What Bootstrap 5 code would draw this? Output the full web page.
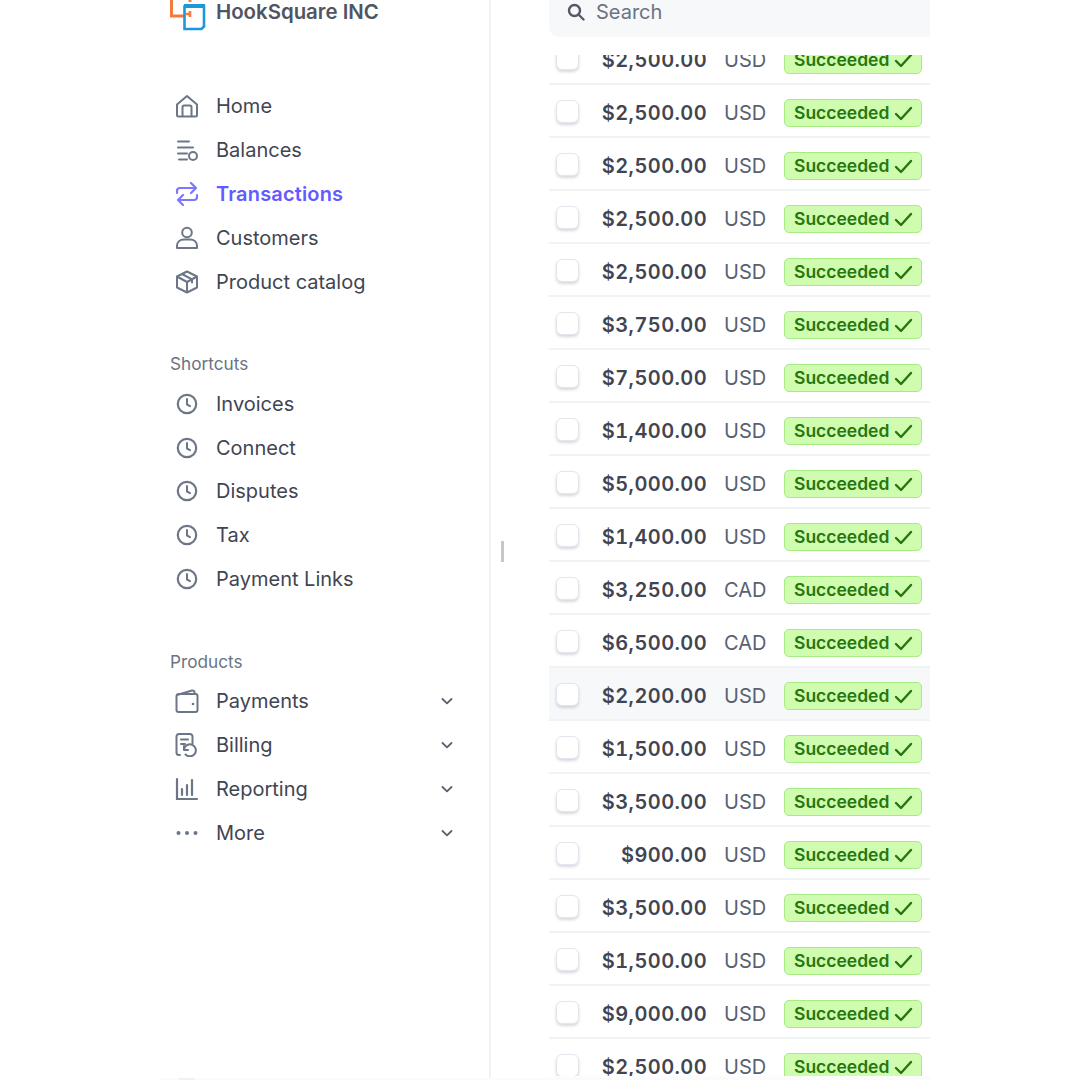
<!DOCTYPE html>
<html lang="en">
<head>
    <meta charset="UTF-8">
    <meta name="viewport" content="width=device-width, initial-scale=1.0">
    <title>Transactions</title>
    <link rel="stylesheet" href="https://cdn.jsdelivr.net/npm/bootstrap@5.3.0/dist/css/bootstrap.min.css">
    <script defer src="https://cdn.jsdelivr.net/npm/bootstrap@5.3.0/dist/js/bootstrap.bundle.min.js"></script>
    <style>
        body { font-family: Inter, "Liberation Sans", sans-serif; color: #414552; background: #fff; overflow: hidden; }
        .app-shell { height: 1080px; overflow: hidden; }
        .side-panel { width: 491px; height: 1080px; padding-left: 170px; padding-right: 35px; border-right: 2px solid #f1f2f4; flex: none; }
        .brand-row { height: 31px; margin-bottom: 53px; }
        .brand-logo { width: 36px; height: 31px; flex: none; }
        .brand-name { font-size: 20.4px; font-weight: 600; color: #4f5563; margin-left: 10px; margin-top: -6px; white-space: nowrap; }
        .side-link { height: 44px; font-size: 20px; color: #414552; white-space: nowrap; }
        .shortcut-group .side-link { height: 43.8px; }
        .side-link.is-active { color: #635bff; font-weight: 600; letter-spacing: .15px; }
        .side-icon { width: 24px; height: 24px; margin: 0 17px 0 5px; flex: none; color: #6c7688; }
        .is-active .side-icon { color: #7d76ff; }
        .side-chevron { width: 14px; height: 14px; color: #596171; }
        .side-heading { font-size: 17.2px; color: #6a7383; height: 22px; line-height: 22px; margin-bottom: 7px; }
        .shortcut-heading { margin-top: 49px; }
        .product-heading { margin-top: 50px; margin-bottom: 6px; }
        .main-panel { width: 381px; margin-left: 58px; height: 1080px; flex: none; }
        .search-box { height: 37px; background: #f6f8fa; border-radius: 0 0 0 10px; padding: 0 0 13px 18px; font-size: 20px; color: #6a7383; }
        .search-box svg { width: 18px; height: 18px; margin-right: 11px; color: #545969; }
        .tx-clip { margin-top: 18px; height: 1021px; overflow: hidden; }
        .tx-list { margin-top: -23px; }
        .tx-row { height: 53px; border-bottom: 2px solid #f1f2f4; padding: 5px 0 0 7px; }
        .tx-row.is-hover { background: #f6f8fa; }
        .tx-check { width: 23px; height: 23px; margin-top: -3px; border-radius: 6px; background: #fff; border: 1px solid #e3e6ec; box-shadow: 0 2px 3px rgba(60,66,87,.2); flex: none; }
        .tx-amount { width: 128px; text-align: right; font-size: 20px; font-weight: 600; color: #414552; flex: none; letter-spacing: .42px; font-variant-numeric: tabular-nums; }
        .tx-currency { width: 60px; margin-left: 17px; font-size: 20px; color: #596171; flex: none; }
        .tx-status { width: 138px; height: 28px; background: #cffcae; border: 1px solid #a6eb84; border-radius: 5px; padding-left: 9px; font-size: 17.5px; font-weight: 600; color: #27760f; flex: none; }
        .tx-status svg { width: 19px; height: 19px; margin-left: 5px; }
        .bottom-strip { height: 4px; background: #fbfcfd; }
        .drag-handle { position: absolute; left: 501px; top: 541px; width: 3px; height: 21px; background: #c4c8ce; }
        .page-fade { position: absolute; left: 160px; top: 1078px; width: 770px; height: 2px; background: #fbfbfc; }
        .page-fade-mark { position: absolute; left: 19px; top: 0; width: 16px; height: 2px; background: #f0f1f3; }
    </style>
</head>
<body>
    <svg width="0" height="0" class="d-block position-absolute">
        <symbol id="ico-clock" viewBox="0 0 24 24"><circle cx="12" cy="12" r="9.2" fill="none" stroke="currentColor" stroke-width="2.2"/><path d="M12 7v5.5l3 1.6" fill="none" stroke="currentColor" stroke-width="2" stroke-linecap="round" stroke-linejoin="round"/></symbol>
        <symbol id="ico-chevron" viewBox="0 0 14 14"><path d="M2.500 5l4.500 4.400L11.500 5" fill="none" stroke="currentColor" stroke-width="1.800" stroke-linecap="round" stroke-linejoin="round"/></symbol>
        <symbol id="ico-check" viewBox="0 0 19 19"><path d="M2 10l5 5L17 4" fill="none" stroke="currentColor" stroke-width="2.400" stroke-linecap="round" stroke-linejoin="round"/></symbol>
    </svg>

    <div class="app-shell d-flex position-relative">
        <!-- Sidebar -->
        <aside class="side-panel">
            <div class="brand-row d-flex align-items-center">
                <svg class="brand-logo" viewBox="0 0 36 31">
                    <path d="M1.500 -6V16H21" fill="none" stroke="#f47b3e" stroke-width="3"/>
                    <path d="M20 -6V2M20 10V17" fill="none" stroke="#f47b3e" stroke-width="3"/>
                    <path d="M14.500 6.500H34V26.500l-2.500 2.500H14.500Z" fill="#fff" stroke="#1d97dc" stroke-width="2.600"/>
                    <path d="M14 6H35" stroke="#1d97dc" stroke-width="4"/>
                    <path d="M16 14h5M20 11v6" stroke="#f47b3e" stroke-width="2.600" fill="none"/>
                </svg>
                <span class="brand-name">HookSquare INC</span>
            </div>

            <nav>
                <a class="side-link d-flex align-items-center text-decoration-none" href="#">
                    <svg class="side-icon" viewBox="0 0 24 24" fill="none" stroke="currentColor" stroke-width="2" stroke-linejoin="round"><path d="M2 10.500 12 2l10 8.500V21a1.500 1.500 0 0 1-1.500 1.500H3.500A1.500 1.500 0 0 1 2 21Z"/><path d="M7.500 22.500V13a1.500 1.500 0 0 1 1.500-1.500h6a1.500 1.500 0 0 1 1.500 1.500v9.500"/></svg>
                    Home
                </a>
                <a class="side-link d-flex align-items-center text-decoration-none" href="#">
                    <svg class="side-icon" viewBox="0 0 24 24" fill="none" stroke="currentColor" stroke-width="2" stroke-linecap="round"><path d="M3 3.500h11M3 9.500h15M3 15.500h9M4 21.500h8"/><circle cx="18" cy="18" r="4" fill="#fff"/></svg>
                    Balances
                </a>
                <a class="side-link is-active d-flex align-items-center text-decoration-none" href="#">
                    <svg class="side-icon" viewBox="0 0 24 24" fill="none" stroke="currentColor" stroke-width="2.200" stroke-linecap="round" stroke-linejoin="round"><path d="M2 11V9a3 3 0 0 1 3-3h16M16 1l5 5-5 5"/><path d="M22 13v2a3 3 0 0 1-3 3H3M8 13l-5 5 5 5"/></svg>
                    Transactions
                </a>
                <a class="side-link d-flex align-items-center text-decoration-none" href="#">
                    <svg class="side-icon" viewBox="0 0 24 24" fill="none" stroke="currentColor" stroke-width="2" stroke-linejoin="round"><circle cx="12" cy="6.500" r="4.800"/><path d="M2 20c0-4 3-6.500 7-6.500h6c4 0 7 2.500 7 6.500v2H2Z"/></svg>
                    Customers
                </a>
                <a class="side-link d-flex align-items-center text-decoration-none" href="#">
                    <svg class="side-icon" viewBox="0 0 24 24" fill="none" stroke="currentColor" stroke-width="2" stroke-linejoin="round"><path d="M12 1.500 22 6.500v11L12 22.500 2 17.500v-11Z"/><path d="M2 6.500 12 12l10-5.500M12 12v10.500M7 4l10 5.300v4"/></svg>
                    Product catalog
                </a>
            </nav>

            <div class="side-heading shortcut-heading">Shortcuts</div>
            <nav class="shortcut-group">
                <a class="side-link d-flex align-items-center text-decoration-none" href="#"><svg class="side-icon"><use href="#ico-clock"/></svg>Invoices</a>
                <a class="side-link d-flex align-items-center text-decoration-none" href="#"><svg class="side-icon"><use href="#ico-clock"/></svg>Connect</a>
                <a class="side-link d-flex align-items-center text-decoration-none" href="#"><svg class="side-icon"><use href="#ico-clock"/></svg>Disputes</a>
                <a class="side-link d-flex align-items-center text-decoration-none" href="#"><svg class="side-icon"><use href="#ico-clock"/></svg>Tax</a>
                <a class="side-link d-flex align-items-center text-decoration-none" href="#"><svg class="side-icon"><use href="#ico-clock"/></svg>Payment Links</a>
            </nav>

            <div class="side-heading product-heading">Products</div>
            <nav>
                <a class="side-link d-flex align-items-center text-decoration-none" href="#">
                    <svg class="side-icon" viewBox="0 0 24 24" fill="none" stroke="currentColor" stroke-width="2" stroke-linejoin="round"><path d="M1.500 7a2 2 0 0 1 2-2h17a2 2 0 0 1 2 2v14a2 2 0 0 1-2 2h-17a2 2 0 0 1-2-2Z"/><path d="M2 6 17 1.500a2 2 0 0 1 2.500 2V5"/><circle cx="18" cy="15" r="1.300" fill="currentColor" stroke="none"/></svg>
                    <span class="flex-grow-1">Payments</span>
                    <svg class="side-chevron"><use href="#ico-chevron"/></svg>
                </a>
                <a class="side-link d-flex align-items-center text-decoration-none" href="#">
                    <svg class="side-icon" viewBox="0 0 24 24" fill="none" stroke="currentColor" stroke-width="2" stroke-linecap="round" stroke-linejoin="round"><path d="M5 22H4a2.500 2.500 0 0 1-2.500-2.500v-16A2.500 2.500 0 0 1 4 1h11a2.500 2.500 0 0 1 2.500 2.500V11"/><path d="M6 6.500h7M6 11h4"/><path d="M9 16a6 6 0 1 1 1.500 5.500M9 13v4h4"/></svg>
                    <span class="flex-grow-1">Billing</span>
                    <svg class="side-chevron"><use href="#ico-chevron"/></svg>
                </a>
                <a class="side-link d-flex align-items-center text-decoration-none" href="#">
                    <svg class="side-icon" viewBox="0 0 24 24" fill="none" stroke="currentColor" stroke-width="2.200" stroke-linecap="round"><path d="M2 2v20h20"/><path d="M7 12v6M12 8v10M17 3v15"/></svg>
                    <span class="flex-grow-1">Reporting</span>
                    <svg class="side-chevron"><use href="#ico-chevron"/></svg>
                </a>
                <a class="side-link d-flex align-items-center text-decoration-none" href="#">
                    <svg class="side-icon" viewBox="0 0 24 24" fill="currentColor"><circle cx="3.500" cy="12" r="2"/><circle cx="12" cy="12" r="2"/><circle cx="20.500" cy="12" r="2"/></svg>
                    <span class="flex-grow-1">More</span>
                    <svg class="side-chevron"><use href="#ico-chevron"/></svg>
                </a>
            </nav>
        </aside>

        <div class="drag-handle"></div>

        <!-- Transactions -->
        <main class="main-panel">
            <div class="search-box d-flex align-items-center">
                <svg viewBox="0 0 18 18" fill="none" stroke="currentColor" stroke-width="2.400" stroke-linecap="round"><circle cx="7.500" cy="7.500" r="5.500"/><path d="m12 12 4.500 4.500"/></svg>
                Search
            </div>
            <div class="tx-clip">
                <div class="tx-list" id="txList"></div>
            </div>
            <div class="bottom-strip"></div>
        </main>

        <div class="page-fade"><div class="page-fade-mark"></div></div>
    </div>

    <script>
        const rows = [
            ['$2,500.00', 'USD'], ['$2,500.00', 'USD'], ['$2,500.00', 'USD'], ['$2,500.00', 'USD'], ['$2,500.00', 'USD'],
            ['$3,750.00', 'USD'], ['$7,500.00', 'USD'], ['$1,400.00', 'USD'], ['$5,000.00', 'USD'], ['$1,400.00', 'USD'],
            ['$3,250.00', 'CAD'], ['$6,500.00', 'CAD'], ['$2,200.00', 'USD'], ['$1,500.00', 'USD'], ['$3,500.00', 'USD'],
            ['$900.00', 'USD'], ['$3,500.00', 'USD'], ['$1,500.00', 'USD'], ['$9,000.00', 'USD'], ['$2,500.00', 'USD']
        ];
        const txList = document.getElementById('txList');

        rows.forEach((row, index) => {
            const el = document.createElement('div');
            el.className = 'tx-row d-flex align-items-center' + (index === 12 ? ' is-hover' : '');
            el.innerHTML = `
                <span class="tx-check"></span>
                <span class="tx-amount">${row[0]}</span>
                <span class="tx-currency">${row[1]}</span>
                <span class="tx-status d-flex align-items-center">Succeeded<svg><use href="#ico-check"/></svg></span>
            `;
            txList.appendChild(el);
        });
    </script>
</body>
</html>
